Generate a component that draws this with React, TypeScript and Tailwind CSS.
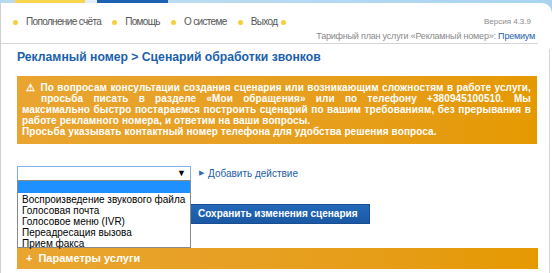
import { useState } from "react";

const navItems = ["Пополнение счёта", "Помощь", "О системе", "Выход", ""];

const options = [
    "",
    "Воспроизведение звукового файла",
    "Голосовая почта",
    "Голосовое меню (IVR)",
    "Переадресация вызова",
    "Прием факса",
];

function NavDot() {
    return <span className="inline-block w-[5px] h-[5px] rounded-full bg-[#f5cf3c]" />;
}

export default function App() {
    const [selected] = useState(0);

    return (
        <div className="w-[552px] h-[273px] overflow-hidden bg-gradient-to-r from-[#c4e1f4] to-[#a9d3ef] font-['Liberation_Sans',sans-serif]">
            {/* верхняя цветная полоса */}
            <div className="flex h-[3px]">
                <div className="w-[15px] bg-[#b5daf1]" />
                <div className="w-[70px] bg-[#f6d54c]" />
                <div className="w-[12px] bg-[#e4eef6]" />
                <div className="w-[71px] bg-[#1d62b2]" />
            </div>

            <div className="bg-white rounded-tr-[10px] border-l border-[#d0d0d0] h-[270px]">
                {/* шапка */}
                <header className="w-[537px] h-[41px] flex justify-between items-start border-b border-[#d6d6d6]">
                    <nav className="flex items-center mt-[13px] pl-[12px] whitespace-nowrap text-[10px] leading-[12px] tracking-[-0.65px] text-[#555]">
                        {navItems.map((item, i) => (
                            <div key={i} className={i === 3 ? "flex items-center gap-[8px] mr-[4px]" : "flex items-center gap-[8px] mr-[11px]"}>
                                <NavDot />
                                {item && <span>{item}</span>}
                            </div>
                        ))}
                    </nav>
                    <div className="pt-[14px] pr-[3px] text-right leading-[10px] text-[#8a8a8a] whitespace-nowrap">
                        <div className="pr-[4px] text-[8px]">Версия 4.3.9</div>
                        <div className="mt-[4px] text-[9px] tracking-[-0.2px]">
                            Тарифный план услуги «Рекламный номер»: <span className="text-[#1d5fae]">Премиум</span>
                        </div>
                    </div>
                </header>

                {/* основная часть */}
                <main className="w-[549px] h-[228px] border-r border-[#d6d6d6] pl-[16px] pr-[12px]">
                    <h1 className="mt-[5px] text-[12.2px] leading-[16px] font-bold text-[#1b5fad] whitespace-nowrap">
                        Рекламный номер &gt; Сценарий обработки звонков
                    </h1>

                    <div className="mt-[11px] w-[520px] bg-gradient-to-r from-[#e9a530] to-[#e59900] pl-[5px] pr-[6px] pt-[6px] pb-[7px] text-white font-bold text-[10px] leading-[11px] tracking-[0.1px]">
                        <p className="pl-[4px] text-justify [text-align-last:justify]">
                            <span className="mr-[5px]">⚠</span>По вопросам консультации создания сценария или возникающим сложностям в работе услуги,
                        </p>
                        <p className="pl-[19px] text-justify [text-align-last:justify]">
                            просьба писать в разделе «Мои обращения» или по телефону +380945100510. Мы
                        </p>
                        <p className="text-justify [text-align-last:justify]">
                            максимально быстро постараемся построить сценарий по вашим требованиям, без прерывания в
                        </p>
                        <p>работе рекламного номера, и ответим на ваши вопросы.</p>
                        <p>Просьба указывать контактный номер телефона для удобства решения вопроса.</p>
                    </div>

                    {/* выбор действия */}
                    <div className="relative mt-[22px] flex items-center h-[15px]">
                        <div className="w-[174px] h-[15px] border border-[#7fb2e5] bg-white flex justify-end items-center pr-[4px]">
                            <span className="text-[9px] leading-[9px] text-black">▼</span>
                        </div>
                        <span className="ml-[8px] text-[7px] text-[#2d6bb5]">▶</span>
                        <a className="ml-[4px] text-[10px] text-[#1c5ea8]">Добавить действие</a>

                        <ul className="absolute z-10 left-0 top-[14px] w-[174px] h-[68px] border border-[#8a8a8a] bg-white text-[10px] leading-[11px] text-black">
                            {options.map((o, i) => (
                                <li
                                    key={i}
                                    className={
                                        i === selected
                                            ? "h-[12px] bg-[#1e90ff] mb-[1px]"
                                            : "h-[11px] pl-[4px] whitespace-nowrap"
                                    }
                                >
                                    {o}
                                </li>
                            ))}
                        </ul>
                    </div>

                    <button className="block mt-[23px] ml-[169px] h-[20px] px-[11px] bg-gradient-to-b from-[#2369ba] to-[#1a58a3] border border-[#174e91] text-white font-bold text-[10px] leading-[18px] whitespace-nowrap">
                        Сохранить изменения сценария
                    </button>

                    <div className="mt-[24px] w-[521px] h-[21px] flex items-center bg-gradient-to-r from-[#e9a530] to-[#e59900] pl-[9px] text-white font-bold text-[11px]">
                        <span className="mr-[6px]">+</span>
                        <span>Параметры услуги</span>
                    </div>
                </main>
            </div>
        </div>
    );
}
